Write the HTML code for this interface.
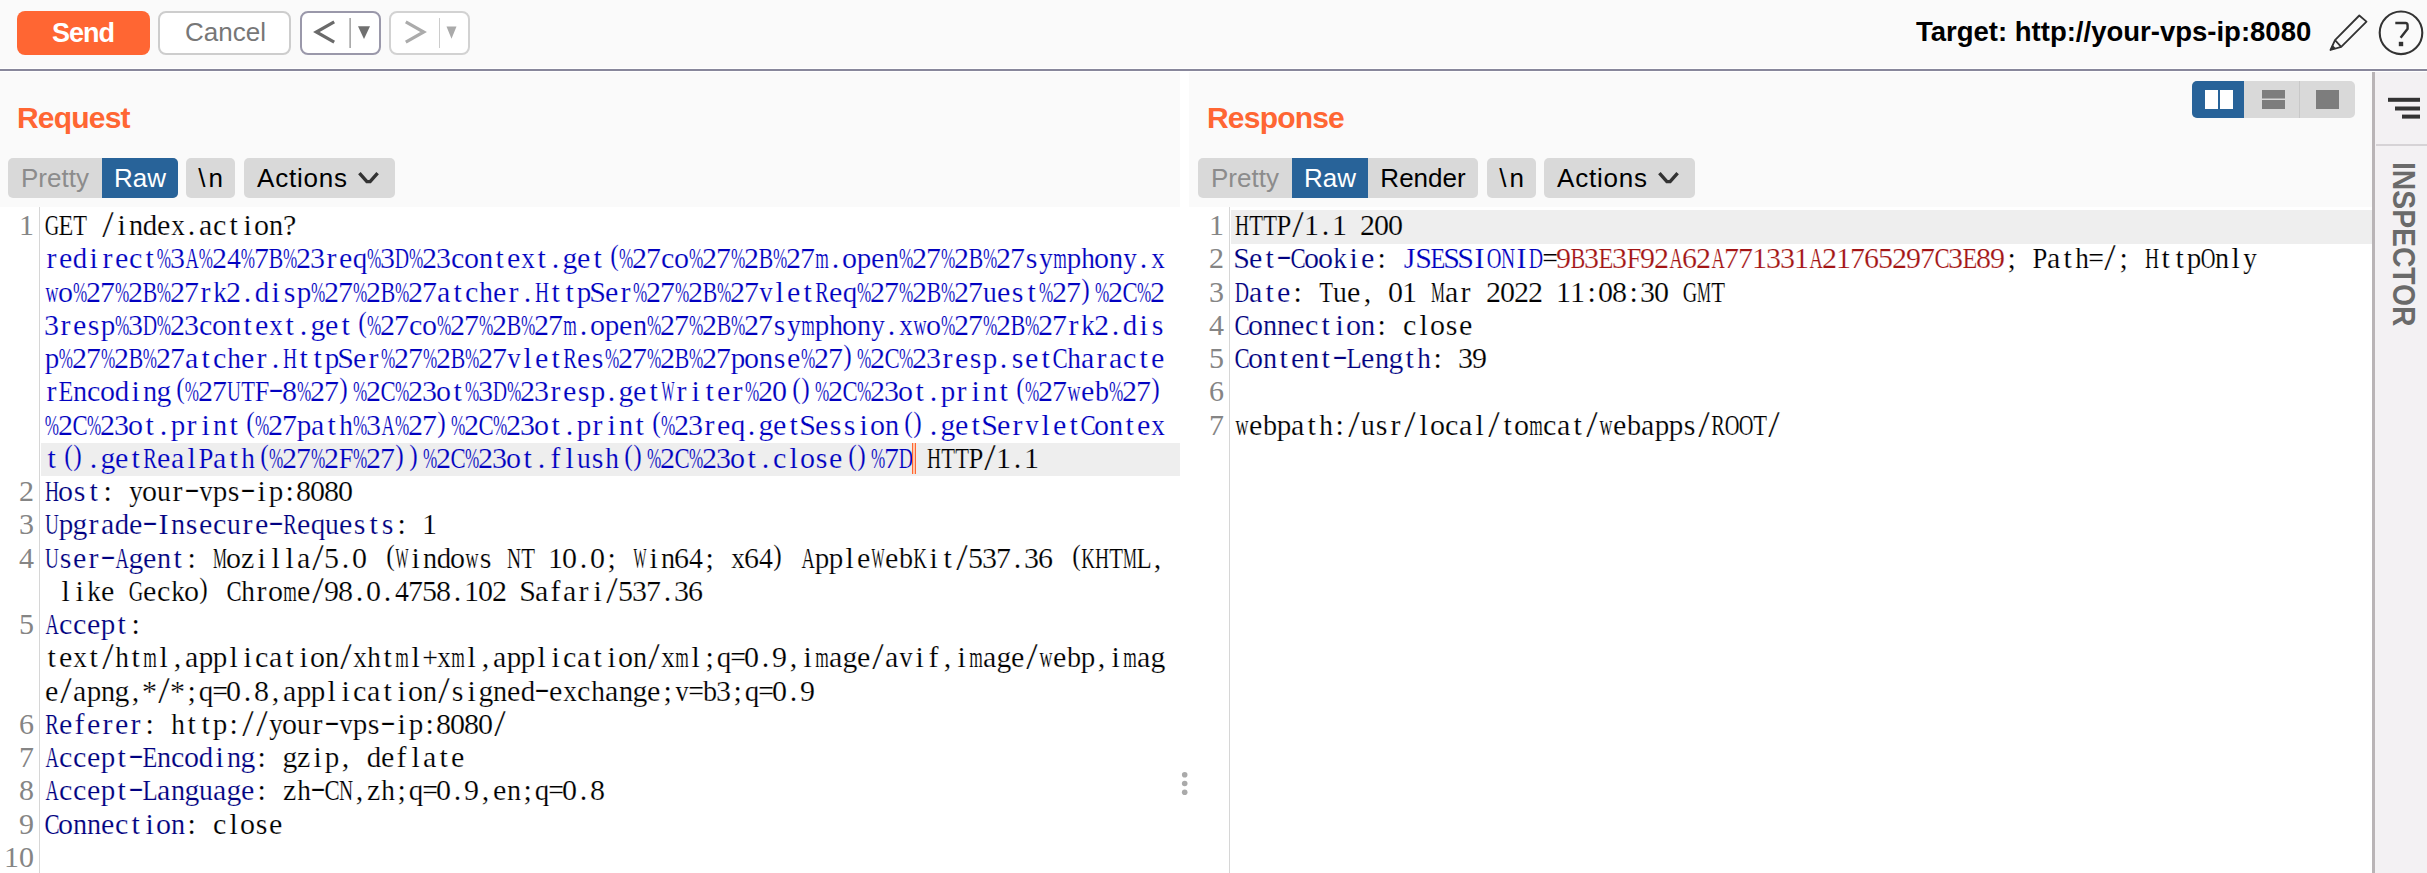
<!DOCTYPE html>
<html><head><meta charset="utf-8">
<style>
*{margin:0;padding:0;box-sizing:border-box}
html,body{width:2427px;height:873px;overflow:hidden;background:#fafafa;font-family:"Liberation Sans",sans-serif}
.abs{position:absolute}
#tb{position:absolute;left:0;top:0;width:2427px;height:69px;background:#fafafa}
#tbb{position:absolute;left:0;top:69px;width:2427px;height:2px;background:#88879b}
.btn{position:absolute;top:11px;height:44px;border-radius:8px;font-size:26px;text-align:center;line-height:44px}
#send{left:17px;width:133px;background:#ff6633;color:#fff;font-weight:bold;font-size:27px;letter-spacing:-1px;text-indent:-1px}
#cancel{left:158px;width:133px;background:#fff;border:2px solid #cdcdcd;color:#777;line-height:38px;text-indent:2px}
#prev{left:300px;width:81px;background:#fff;border:2px solid #9a98aa}
#next{left:389px;width:81px;background:#fff;border:2px solid #d2d2d2}
#target{position:absolute;left:1916px;top:14px;font-size:27.5px;font-weight:bold;color:#000;white-space:nowrap;line-height:36px}
.hdr{position:absolute;top:72px;height:135px;background:#fafafa}
.code{position:absolute;top:207px;height:666px;background:#fff}
.title{position:absolute;top:98px;font-size:30px;font-weight:bold;color:#ff6633;line-height:40px;white-space:nowrap;letter-spacing:-0.8px}
.tabs{position:absolute;top:158px;height:40px;background:#d9d9d9;border-radius:5px;font-size:26px;line-height:40px;white-space:nowrap}
.tab{position:absolute;top:0;height:40px;text-align:center}
.sel{background:#286399;color:#fff}
.gut{position:absolute;top:207px;width:1px;height:666px;background:#d6d6d6}
.hl{position:absolute;height:33px;background:#eeeeee}
.ln{position:absolute;width:40px;text-align:right;font-family:"Liberation Serif",serif;font-size:30px;line-height:33.25px;color:#858585}
.rqn{left:-6px}
.rsn{left:1184px}
.cl{position:absolute;font-family:"Liberation Serif",serif;font-size:30px;line-height:33.25px;white-space:pre;-webkit-text-stroke:0.2px #fff}
.cl b{display:inline-flex;justify-content:center;width:14px;font-weight:normal}
.cl b.hy{transform:translateY(-2.8px) scaleX(1.55)}.cl b.pl{transform:translate(2.6px,-3.2px) scaleX(.85)}.cl b.pr{transform:translate(-2.6px,-3.2px) scaleX(.85)}.cl b.s46{transform:scaleX(0.46)}.cl b.s52{transform:scaleX(0.52)}.cl b.s57{transform:scaleX(0.57)}.cl b.s58{transform:scaleX(0.58)}.cl b.s60{transform:scaleX(0.6)}.cl b.s61{transform:scaleX(0.61)}.cl b.s63{transform:scaleX(0.63)}.cl b.s64{transform:scaleX(0.64)}.cl b.s65{transform:scaleX(0.65)}.cl b.s66{transform:scaleX(0.66)}.cl b.s67{transform:scaleX(0.67)}.cl b.s68{transform:scaleX(0.68)}.cl b.s74{transform:scaleX(0.74)}.cl b.s75{transform:scaleX(0.75)}.cl b.s76{transform:scaleX(0.76)}.cl b.s81{transform:scaleX(0.81)}.cl b.s83{transform:scaleX(0.83)}.cl b.s87{transform:scaleX(0.87)}.cl b.s88{transform:scaleX(0.88)}.cl b.s89{transform:scaleX(0.89)}.cl b.s90{transform:scaleX(0.9)}.cl b.s91{transform:scaleX(0.91)}.cl b.s92{transform:scaleX(0.92)}.cl b.s93{transform:scaleX(0.93)}.cl b.s94{transform:scaleX(0.94)}.cl b.s96{transform:scaleX(0.96)}.cl b.s97{transform:scaleX(0.97)}.cl b.s99{transform:scaleX(0.99)}.cl b.sl{transform:translateY(-0.8px) scale(1.38,1.25)}
.rqt{left:44.6px}
.cl.hlt{-webkit-text-stroke-color:#eee}
.rst{left:1234.6px}
#side{position:absolute;left:2375px;top:72px;width:52px;height:801px;background:#f3f1f3}
#sideb{position:absolute;left:2372px;top:72px;width:3px;height:801px;background:#b9b4b6}
</style></head><body>
<div id="tb"></div>
<div class="abs" style="left:0;top:68px;width:2427px;height:4px;background:#fff"></div>
<div id="tbb"></div>
<div class="btn" id="send">Send</div>
<div class="btn" id="cancel">Cancel</div>
<div class="btn" id="prev"></div>
<div class="btn" id="next"></div>
<svg class="abs" style="left:0;top:0" width="480" height="70">
 <polyline points="334.2,21.8 316.3,32 334.2,42.2" fill="none" stroke="#6a6a6a" stroke-width="3.2"/>
 <rect x="349.5" y="18" width="1.2" height="30" fill="#888"/>
 <polygon points="358,26.3 370,26.3 364,38.9" fill="#707070"/>
 <polyline points="405.8,21.8 423.7,32 405.8,42.2" fill="none" stroke="#ababab" stroke-width="3.2"/>
 <rect x="439" y="18" width="1" height="30" fill="#ccc"/>
 <polygon points="446.5,26.5 456.5,26.5 451.5,38.7" fill="#aaa"/>
</svg>
<div id="target">Target: http://your-vps-ip:8080</div>
<svg class="abs" style="left:2320px;top:0" width="107" height="69">
 <path d="M10.5,50 L15,40.2 L39.3,15.5 L46.5,21.6 L21.2,46.9 Z M15,40.2 L21.2,46.9" fill="none" stroke="#333" stroke-width="1.8" stroke-linejoin="round"/><path d="M10,50.5 L12.3,44.8 L15.8,48.2 Z" fill="#333"/>
 <circle cx="81" cy="32.8" r="21.3" fill="none" stroke="#333" stroke-width="2.1"/>
 <path d="M75.3,23 L85.5,23 Q87.6,23 87.6,25.5 L87.6,28.8 L80.6,37.8" fill="none" stroke="#333" stroke-width="2.4"/>
 <rect x="78.8" y="41.8" width="4.4" height="4.4" fill="#333"/>
</svg>

<!-- request panel -->
<div class="hdr" style="left:0;width:1180px"></div>
<div class="abs" style="left:1180px;top:72px;width:9px;height:801px;background:#fff"></div>
<div class="code" style="left:0;width:1180px"></div>
<div class="title" style="left:17px">Request</div>
<div class="tabs" style="left:8px;width:170px">
 <div class="tab" style="left:0;width:94px;color:#8c8c8c">Pretty</div>
 <div class="tab sel" style="left:94px;width:76px;border-radius:0 5px 5px 0">Raw</div>
</div>
<div class="tabs" style="left:186px;width:49px"><div class="tab" style="left:0;width:49px;color:#000;letter-spacing:3px;text-indent:3px">\n</div></div>
<div class="tabs" style="left:244px;width:151px"><div class="tab" style="left:13px;color:#000;letter-spacing:0.8px">Actions</div>
 <svg class="abs" style="left:113px;top:12px" width="24" height="16"><polyline points="2.4,3.2 9.9,11.6 13.1,11.6 20.6,3.2" fill="none" stroke="#333" stroke-width="3.4"/></svg></div>
<div class="gut" style="left:39px"></div>
<div class="hl" style="left:41px;top:443px;width:1139px"></div>
<svg class="abs" style="left:1180px;top:768px" width="10" height="30">
 <circle cx="4.7" cy="6.8" r="2.8" fill="#aaa"/><circle cx="4.7" cy="15.5" r="2.8" fill="#aaa"/><circle cx="4.7" cy="24.3" r="2.8" fill="#aaa"/>
</svg>
<div class="ln rqn" style="top:208.20px">1</div>
<div class="cl rqt" style="top:208.20px"><span style="color:#000"><b class="s67">G</b><b class="s81">E</b><b class="s75">T</b><b> </b><b class="sl">/</b><b>i</b><b class="s94">n</b><b class="s96">d</b><b>e</b><b class="s90">x</b><b>.</b><b>a</b><b>c</b><b>t</b><b>i</b><b>o</b><b class="s94">n</b><b>?</b></span></div>
<div class="cl rqt" style="top:241.45px"><span style="color:#0000c0"><b>r</b><b>e</b><b class="s96">d</b><b>i</b><b>r</b><b>e</b><b>c</b><b>t</b><b class="s57">%</b><b>3</b><b class="s61">A</b><b class="s57">%</b><b>2</b><b class="s93">4</b><b class="s57">%</b><b>7</b><b class="s74">B</b><b class="s57">%</b><b>2</b><b>3</b><b>r</b><b>e</b><b class="s97">q</b><b class="s57">%</b><b>3</b><b class="s66">D</b><b class="s57">%</b><b>2</b><b>3</b><b>c</b><b>o</b><b class="s94">n</b><b>t</b><b>e</b><b class="s90">x</b><b>t</b><b>.</b><b class="s99">g</b><b>e</b><b>t</b><b class="pl">(</b><b class="s57">%</b><b>2</b><b>7</b><b>c</b><b>o</b><b class="s57">%</b><b>2</b><b>7</b><b class="s57">%</b><b>2</b><b class="s74">B</b><b class="s57">%</b><b>2</b><b>7</b><b class="s58">m</b><b>.</b><b>o</b><b class="s97">p</b><b>e</b><b class="s94">n</b><b class="s57">%</b><b>2</b><b>7</b><b class="s57">%</b><b>2</b><b class="s74">B</b><b class="s57">%</b><b>2</b><b>7</b><b>s</b><b class="s90">y</b><b class="s58">m</b><b class="s97">p</b><b class="s91">h</b><b>o</b><b class="s94">n</b><b class="s90">y</b><b>.</b><b class="s90">x</b></span></div>
<div class="cl rqt" style="top:274.70px"><span style="color:#0000c0"><b class="s60">w</b><b>o</b><b class="s57">%</b><b>2</b><b>7</b><b class="s57">%</b><b>2</b><b class="s74">B</b><b class="s57">%</b><b>2</b><b>7</b><b>r</b><b class="s90">k</b><b>2</b><b>.</b><b class="s96">d</b><b>i</b><b>s</b><b class="s97">p</b><b class="s57">%</b><b>2</b><b>7</b><b class="s57">%</b><b>2</b><b class="s74">B</b><b class="s57">%</b><b>2</b><b>7</b><b>a</b><b>t</b><b>c</b><b class="s91">h</b><b>e</b><b>r</b><b>.</b><b class="s65">H</b><b>t</b><b>t</b><b class="s97">p</b><b>S</b><b>e</b><b>r</b><b class="s57">%</b><b>2</b><b>7</b><b class="s57">%</b><b>2</b><b class="s74">B</b><b class="s57">%</b><b>2</b><b>7</b><b class="s87">v</b><b>l</b><b>e</b><b>t</b><b class="s68">R</b><b>e</b><b class="s97">q</b><b class="s57">%</b><b>2</b><b>7</b><b class="s57">%</b><b>2</b><b class="s74">B</b><b class="s57">%</b><b>2</b><b>7</b><b class="s92">u</b><b>e</b><b>s</b><b>t</b><b class="s57">%</b><b>2</b><b>7</b><b class="pr">)</b><b class="s57">%</b><b>2</b><b class="s76">C</b><b class="s57">%</b><b>2</b></span></div>
<div class="cl rqt" style="top:307.95px"><span style="color:#0000c0"><b>3</b><b>r</b><b>e</b><b>s</b><b class="s97">p</b><b class="s57">%</b><b>3</b><b class="s66">D</b><b class="s57">%</b><b>2</b><b>3</b><b>c</b><b>o</b><b class="s94">n</b><b>t</b><b>e</b><b class="s90">x</b><b>t</b><b>.</b><b class="s99">g</b><b>e</b><b>t</b><b class="pl">(</b><b class="s57">%</b><b>2</b><b>7</b><b>c</b><b>o</b><b class="s57">%</b><b>2</b><b>7</b><b class="s57">%</b><b>2</b><b class="s74">B</b><b class="s57">%</b><b>2</b><b>7</b><b class="s58">m</b><b>.</b><b>o</b><b class="s97">p</b><b>e</b><b class="s94">n</b><b class="s57">%</b><b>2</b><b>7</b><b class="s57">%</b><b>2</b><b class="s74">B</b><b class="s57">%</b><b>2</b><b>7</b><b>s</b><b class="s90">y</b><b class="s58">m</b><b class="s97">p</b><b class="s91">h</b><b>o</b><b class="s94">n</b><b class="s90">y</b><b>.</b><b class="s90">x</b><b class="s60">w</b><b>o</b><b class="s57">%</b><b>2</b><b>7</b><b class="s57">%</b><b>2</b><b class="s74">B</b><b class="s57">%</b><b>2</b><b>7</b><b>r</b><b class="s90">k</b><b>2</b><b>.</b><b class="s96">d</b><b>i</b><b>s</b></span></div>
<div class="cl rqt" style="top:341.20px"><span style="color:#0000c0"><b class="s97">p</b><b class="s57">%</b><b>2</b><b>7</b><b class="s57">%</b><b>2</b><b class="s74">B</b><b class="s57">%</b><b>2</b><b>7</b><b>a</b><b>t</b><b>c</b><b class="s91">h</b><b>e</b><b>r</b><b>.</b><b class="s65">H</b><b>t</b><b>t</b><b class="s97">p</b><b>S</b><b>e</b><b>r</b><b class="s57">%</b><b>2</b><b>7</b><b class="s57">%</b><b>2</b><b class="s74">B</b><b class="s57">%</b><b>2</b><b>7</b><b class="s87">v</b><b>l</b><b>e</b><b>t</b><b class="s68">R</b><b>e</b><b>s</b><b class="s57">%</b><b>2</b><b>7</b><b class="s57">%</b><b>2</b><b class="s74">B</b><b class="s57">%</b><b>2</b><b>7</b><b class="s97">p</b><b>o</b><b class="s94">n</b><b>s</b><b>e</b><b class="s57">%</b><b>2</b><b>7</b><b class="pr">)</b><b class="s57">%</b><b>2</b><b class="s76">C</b><b class="s57">%</b><b>2</b><b>3</b><b>r</b><b>e</b><b>s</b><b class="s97">p</b><b>.</b><b>s</b><b>e</b><b>t</b><b class="s76">C</b><b class="s91">h</b><b>a</b><b>r</b><b>a</b><b>c</b><b>t</b><b>e</b></span></div>
<div class="cl rqt" style="top:374.45px"><span style="color:#0000c0"><b>r</b><b class="s81">E</b><b class="s94">n</b><b>c</b><b>o</b><b class="s96">d</b><b>i</b><b class="s94">n</b><b class="s99">g</b><b class="pl">(</b><b class="s57">%</b><b>2</b><b>7</b><b class="s64">U</b><b class="s75">T</b><b class="s88">F</b><b class="hy">-</b><b>8</b><b class="s57">%</b><b>2</b><b>7</b><b class="pr">)</b><b class="s57">%</b><b>2</b><b class="s76">C</b><b class="s57">%</b><b>2</b><b>3</b><b>o</b><b>t</b><b class="s57">%</b><b>3</b><b class="s66">D</b><b class="s57">%</b><b>2</b><b>3</b><b>r</b><b>e</b><b>s</b><b class="s97">p</b><b>.</b><b class="s99">g</b><b>e</b><b>t</b><b class="s46">W</b><b>r</b><b>i</b><b>t</b><b>e</b><b>r</b><b class="s57">%</b><b>2</b><b>0</b><b class="pl">(</b><b class="pr">)</b><b class="s57">%</b><b>2</b><b class="s76">C</b><b class="s57">%</b><b>2</b><b>3</b><b>o</b><b>t</b><b>.</b><b class="s97">p</b><b>r</b><b>i</b><b class="s94">n</b><b>t</b><b class="pl">(</b><b class="s57">%</b><b>2</b><b>7</b><b class="s60">w</b><b>e</b><b class="s94">b</b><b class="s57">%</b><b>2</b><b>7</b><b class="pr">)</b></span></div>
<div class="cl rqt" style="top:407.70px"><span style="color:#0000c0"><b class="s57">%</b><b>2</b><b class="s76">C</b><b class="s57">%</b><b>2</b><b>3</b><b>o</b><b>t</b><b>.</b><b class="s97">p</b><b>r</b><b>i</b><b class="s94">n</b><b>t</b><b class="pl">(</b><b class="s57">%</b><b>2</b><b>7</b><b class="s97">p</b><b>a</b><b>t</b><b class="s91">h</b><b class="s57">%</b><b>3</b><b class="s61">A</b><b class="s57">%</b><b>2</b><b>7</b><b class="pr">)</b><b class="s57">%</b><b>2</b><b class="s76">C</b><b class="s57">%</b><b>2</b><b>3</b><b>o</b><b>t</b><b>.</b><b class="s97">p</b><b>r</b><b>i</b><b class="s94">n</b><b>t</b><b class="pl">(</b><b class="s57">%</b><b>2</b><b>3</b><b>r</b><b>e</b><b class="s97">q</b><b>.</b><b class="s99">g</b><b>e</b><b>t</b><b>S</b><b>e</b><b>s</b><b>s</b><b>i</b><b>o</b><b class="s94">n</b><b class="pl">(</b><b class="pr">)</b><b>.</b><b class="s99">g</b><b>e</b><b>t</b><b>S</b><b>e</b><b>r</b><b class="s87">v</b><b>l</b><b>e</b><b>t</b><b class="s76">C</b><b>o</b><b class="s94">n</b><b>t</b><b>e</b><b class="s90">x</b></span></div>
<div class="cl rqt hlt" style="top:440.95px"><span style="color:#0000c0"><b>t</b><b class="pl">(</b><b class="pr">)</b><b>.</b><b class="s99">g</b><b>e</b><b>t</b><b class="s68">R</b><b>e</b><b>a</b><b>l</b><b class="s89">P</b><b>a</b><b>t</b><b class="s91">h</b><b class="pl">(</b><b class="s57">%</b><b>2</b><b>7</b><b class="s57">%</b><b>2</b><b class="s88">F</b><b class="s57">%</b><b>2</b><b>7</b><b class="pr">)</b><b class="pr">)</b><b class="s57">%</b><b>2</b><b class="s76">C</b><b class="s57">%</b><b>2</b><b>3</b><b>o</b><b>t</b><b>.</b><b>f</b><b>l</b><b class="s92">u</b><b>s</b><b class="s91">h</b><b class="pl">(</b><b class="pr">)</b><b class="s57">%</b><b>2</b><b class="s76">C</b><b class="s57">%</b><b>2</b><b>3</b><b>o</b><b>t</b><b>.</b><b>c</b><b>l</b><b>o</b><b>s</b><b>e</b><b class="pl">(</b><b class="pr">)</b><b class="s57">%</b><b>7</b><b class="s66">D</b></span><span style="color:#000"><b> </b><b class="s65">H</b><b class="s75">T</b><b class="s75">T</b><b class="s89">P</b><b class="sl">/</b><b>1</b><b>.</b><b>1</b></span></div>
<div class="ln rqn" style="top:474.20px">2</div>
<div class="cl rqt" style="top:474.20px"><span style="color:#000080"><b class="s65">H</b><b>o</b><b>s</b><b>t</b></span><span style="color:#000"><b>:</b><b> </b><b class="s90">y</b><b>o</b><b class="s92">u</b><b>r</b><b class="hy">-</b><b class="s87">v</b><b class="s97">p</b><b>s</b><b class="hy">-</b><b>i</b><b class="s97">p</b><b>:</b><b>8</b><b>0</b><b>8</b><b>0</b></span></div>
<div class="ln rqn" style="top:507.45px">3</div>
<div class="cl rqt" style="top:507.45px"><span style="color:#000080"><b class="s64">U</b><b class="s97">p</b><b class="s99">g</b><b>r</b><b>a</b><b class="s96">d</b><b>e</b><b class="hy">-</b><b>I</b><b class="s94">n</b><b>s</b><b>e</b><b>c</b><b class="s92">u</b><b>r</b><b>e</b><b class="hy">-</b><b class="s68">R</b><b>e</b><b class="s97">q</b><b class="s92">u</b><b>e</b><b>s</b><b>t</b><b>s</b></span><span style="color:#000"><b>:</b><b> </b><b>1</b></span></div>
<div class="ln rqn" style="top:540.70px">4</div>
<div class="cl rqt" style="top:540.70px"><span style="color:#000080"><b class="s64">U</b><b>s</b><b>e</b><b>r</b><b class="hy">-</b><b class="s61">A</b><b class="s99">g</b><b>e</b><b class="s94">n</b><b>t</b></span><span style="color:#000"><b>:</b><b> </b><b class="s52">M</b><b>o</b><b>z</b><b>i</b><b>l</b><b>l</b><b>a</b><b class="sl">/</b><b>5</b><b>.</b><b>0</b><b> </b><b class="pl">(</b><b class="s46">W</b><b>i</b><b class="s94">n</b><b class="s96">d</b><b>o</b><b class="s60">w</b><b>s</b><b> </b><b class="s65">N</b><b class="s75">T</b><b> </b><b>1</b><b>0</b><b>.</b><b>0</b><b>;</b><b> </b><b class="s46">W</b><b>i</b><b class="s94">n</b><b>6</b><b class="s93">4</b><b>;</b><b> </b><b class="s90">x</b><b>6</b><b class="s93">4</b><b class="pr">)</b><b> </b><b class="s61">A</b><b class="s97">p</b><b class="s97">p</b><b>l</b><b>e</b><b class="s46">W</b><b>e</b><b class="s94">b</b><b class="s63">K</b><b>i</b><b>t</b><b class="sl">/</b><b>5</b><b>3</b><b>7</b><b>.</b><b>3</b><b>6</b><b> </b><b class="pl">(</b><b class="s63">K</b><b class="s65">H</b><b class="s75">T</b><b class="s52">M</b><b class="s83">L</b><b>,</b></span></div>
<div class="cl rqt" style="top:573.95px"><span style="color:#000"><b> </b><b>l</b><b>i</b><b class="s90">k</b><b>e</b><b> </b><b class="s67">G</b><b>e</b><b>c</b><b class="s90">k</b><b>o</b><b class="pr">)</b><b> </b><b class="s76">C</b><b class="s91">h</b><b>r</b><b>o</b><b class="s58">m</b><b>e</b><b class="sl">/</b><b>9</b><b>8</b><b>.</b><b>0</b><b>.</b><b class="s93">4</b><b>7</b><b>5</b><b>8</b><b>.</b><b>1</b><b>0</b><b>2</b><b> </b><b>S</b><b>a</b><b>f</b><b>a</b><b>r</b><b>i</b><b class="sl">/</b><b>5</b><b>3</b><b>7</b><b>.</b><b>3</b><b>6</b></span></div>
<div class="ln rqn" style="top:607.20px">5</div>
<div class="cl rqt" style="top:607.20px"><span style="color:#000080"><b class="s61">A</b><b>c</b><b>c</b><b>e</b><b class="s97">p</b><b>t</b></span><span style="color:#000"><b>:</b></span></div>
<div class="cl rqt" style="top:640.45px"><span style="color:#000"><b>t</b><b>e</b><b class="s90">x</b><b>t</b><b class="sl">/</b><b class="s91">h</b><b>t</b><b class="s58">m</b><b>l</b><b>,</b><b>a</b><b class="s97">p</b><b class="s97">p</b><b>l</b><b>i</b><b>c</b><b>a</b><b>t</b><b>i</b><b>o</b><b class="s94">n</b><b class="sl">/</b><b class="s90">x</b><b class="s91">h</b><b>t</b><b class="s58">m</b><b>l</b><b class="s93">+</b><b class="s90">x</b><b class="s58">m</b><b>l</b><b>,</b><b>a</b><b class="s97">p</b><b class="s97">p</b><b>l</b><b>i</b><b>c</b><b>a</b><b>t</b><b>i</b><b>o</b><b class="s94">n</b><b class="sl">/</b><b class="s90">x</b><b class="s58">m</b><b>l</b><b>;</b><b class="s97">q</b><b class="s93">=</b><b>0</b><b>.</b><b>9</b><b>,</b><b>i</b><b class="s58">m</b><b>a</b><b class="s99">g</b><b>e</b><b class="sl">/</b><b>a</b><b class="s87">v</b><b>i</b><b>f</b><b>,</b><b>i</b><b class="s58">m</b><b>a</b><b class="s99">g</b><b>e</b><b class="sl">/</b><b class="s60">w</b><b>e</b><b class="s94">b</b><b class="s97">p</b><b>,</b><b>i</b><b class="s58">m</b><b>a</b><b class="s99">g</b></span></div>
<div class="cl rqt" style="top:673.70px"><span style="color:#000"><b>e</b><b class="sl">/</b><b>a</b><b class="s97">p</b><b class="s94">n</b><b class="s99">g</b><b>,</b><b>*</b><b class="sl">/</b><b>*</b><b>;</b><b class="s97">q</b><b class="s93">=</b><b>0</b><b>.</b><b>8</b><b>,</b><b>a</b><b class="s97">p</b><b class="s97">p</b><b>l</b><b>i</b><b>c</b><b>a</b><b>t</b><b>i</b><b>o</b><b class="s94">n</b><b class="sl">/</b><b>s</b><b>i</b><b class="s99">g</b><b class="s94">n</b><b>e</b><b class="s96">d</b><b class="hy">-</b><b>e</b><b class="s90">x</b><b>c</b><b class="s91">h</b><b>a</b><b class="s94">n</b><b class="s99">g</b><b>e</b><b>;</b><b class="s87">v</b><b class="s93">=</b><b class="s94">b</b><b>3</b><b>;</b><b class="s97">q</b><b class="s93">=</b><b>0</b><b>.</b><b>9</b></span></div>
<div class="ln rqn" style="top:706.95px">6</div>
<div class="cl rqt" style="top:706.95px"><span style="color:#000080"><b class="s68">R</b><b>e</b><b>f</b><b>e</b><b>r</b><b>e</b><b>r</b></span><span style="color:#000"><b>:</b><b> </b><b class="s91">h</b><b>t</b><b>t</b><b class="s97">p</b><b>:</b><b class="sl">/</b><b class="sl">/</b><b class="s90">y</b><b>o</b><b class="s92">u</b><b>r</b><b class="hy">-</b><b class="s87">v</b><b class="s97">p</b><b>s</b><b class="hy">-</b><b>i</b><b class="s97">p</b><b>:</b><b>8</b><b>0</b><b>8</b><b>0</b><b class="sl">/</b></span></div>
<div class="ln rqn" style="top:740.20px">7</div>
<div class="cl rqt" style="top:740.20px"><span style="color:#000080"><b class="s61">A</b><b>c</b><b>c</b><b>e</b><b class="s97">p</b><b>t</b><b class="hy">-</b><b class="s81">E</b><b class="s94">n</b><b>c</b><b>o</b><b class="s96">d</b><b>i</b><b class="s94">n</b><b class="s99">g</b></span><span style="color:#000"><b>:</b><b> </b><b class="s99">g</b><b>z</b><b>i</b><b class="s97">p</b><b>,</b><b> </b><b class="s96">d</b><b>e</b><b>f</b><b>l</b><b>a</b><b>t</b><b>e</b></span></div>
<div class="ln rqn" style="top:773.45px">8</div>
<div class="cl rqt" style="top:773.45px"><span style="color:#000080"><b class="s61">A</b><b>c</b><b>c</b><b>e</b><b class="s97">p</b><b>t</b><b class="hy">-</b><b class="s83">L</b><b>a</b><b class="s94">n</b><b class="s99">g</b><b class="s92">u</b><b>a</b><b class="s99">g</b><b>e</b></span><span style="color:#000"><b>:</b><b> </b><b>z</b><b class="s91">h</b><b class="hy">-</b><b class="s76">C</b><b class="s65">N</b><b>,</b><b>z</b><b class="s91">h</b><b>;</b><b class="s97">q</b><b class="s93">=</b><b>0</b><b>.</b><b>9</b><b>,</b><b>e</b><b class="s94">n</b><b>;</b><b class="s97">q</b><b class="s93">=</b><b>0</b><b>.</b><b>8</b></span></div>
<div class="ln rqn" style="top:806.70px">9</div>
<div class="cl rqt" style="top:806.70px"><span style="color:#000080"><b class="s76">C</b><b>o</b><b class="s94">n</b><b class="s94">n</b><b>e</b><b>c</b><b>t</b><b>i</b><b>o</b><b class="s94">n</b></span><span style="color:#000"><b>:</b><b> </b><b>c</b><b>l</b><b>o</b><b>s</b><b>e</b></span></div>
<div class="ln rqn" style="top:839.95px">10</div>
<div class="abs" style="left:911.5px;top:443px;width:4px;height:31px;border-left:1.6px solid #ff6633;border-right:1.6px solid #ff6633;background:#ffc9ad"></div>


<!-- response panel -->
<div class="hdr" style="left:1189px;width:1183px"></div>
<div class="code" style="left:1189px;width:1183px"></div>
<div class="title" style="left:1207px">Response</div>
<div class="tabs" style="left:1198px;width:280px">
 <div class="tab" style="left:0;width:94px;color:#8c8c8c">Pretty</div>
 <div class="tab sel" style="left:94px;width:76px">Raw</div>
 <div class="tab" style="left:170px;width:110px;color:#000">Render</div>
</div>
<div class="tabs" style="left:1487px;width:49px"><div class="tab" style="left:0;width:49px;color:#000;letter-spacing:3px;text-indent:3px">\n</div></div>
<div class="tabs" style="left:1544px;width:151px"><div class="tab" style="left:13px;color:#000;letter-spacing:0.8px">Actions</div>
 <svg class="abs" style="left:113px;top:12px" width="24" height="16"><polyline points="2.4,3.2 9.9,11.6 13.1,11.6 20.6,3.2" fill="none" stroke="#333" stroke-width="3.4"/></svg></div>
<div class="gut" style="left:1229px"></div>
<div class="hl" style="left:1231px;top:210px;width:1141px;height:34px"></div>
<div class="ln rsn" style="top:208.20px">1</div>
<div class="cl rst hlt" style="top:208.20px"><span style="color:#000"><b class="s65">H</b><b class="s75">T</b><b class="s75">T</b><b class="s89">P</b><b class="sl">/</b><b>1</b><b>.</b><b>1</b><b> </b><b>2</b><b>0</b><b>0</b></span></div>
<div class="ln rsn" style="top:241.45px">2</div>
<div class="cl rst" style="top:241.45px"><span style="color:#000080"><b>S</b><b>e</b><b>t</b><b class="hy">-</b><b class="s76">C</b><b>o</b><b>o</b><b class="s90">k</b><b>i</b><b>e</b></span><span style="color:#000"><b>:</b><b> </b></span><span style="color:#0000c0"><b>J</b><b>S</b><b class="s81">E</b><b>S</b><b>S</b><b>I</b><b class="s68">O</b><b class="s65">N</b><b>I</b><b class="s66">D</b></span><span style="color:#000"><b class="s93">=</b></span><span style="color:#a31515"><b>9</b><b class="s74">B</b><b>3</b><b class="s81">E</b><b>3</b><b class="s88">F</b><b>9</b><b>2</b><b class="s61">A</b><b>6</b><b>2</b><b class="s61">A</b><b>7</b><b>7</b><b>1</b><b>3</b><b>3</b><b>1</b><b class="s61">A</b><b>2</b><b>1</b><b>7</b><b>6</b><b>5</b><b>2</b><b>9</b><b>7</b><b class="s76">C</b><b>3</b><b class="s81">E</b><b>8</b><b>9</b></span><span style="color:#000"><b>;</b><b> </b><b class="s89">P</b><b>a</b><b>t</b><b class="s91">h</b><b class="s93">=</b><b class="sl">/</b><b>;</b><b> </b><b class="s65">H</b><b>t</b><b>t</b><b class="s97">p</b><b class="s68">O</b><b class="s94">n</b><b>l</b><b class="s90">y</b></span></div>
<div class="ln rsn" style="top:274.70px">3</div>
<div class="cl rst" style="top:274.70px"><span style="color:#000080"><b class="s66">D</b><b>a</b><b>t</b><b>e</b></span><span style="color:#000"><b>:</b><b> </b><b class="s75">T</b><b class="s92">u</b><b>e</b><b>,</b><b> </b><b>0</b><b>1</b><b> </b><b class="s52">M</b><b>a</b><b>r</b><b> </b><b>2</b><b>0</b><b>2</b><b>2</b><b> </b><b>1</b><b>1</b><b>:</b><b>0</b><b>8</b><b>:</b><b>3</b><b>0</b><b> </b><b class="s67">G</b><b class="s52">M</b><b class="s75">T</b></span></div>
<div class="ln rsn" style="top:307.95px">4</div>
<div class="cl rst" style="top:307.95px"><span style="color:#000080"><b class="s76">C</b><b>o</b><b class="s94">n</b><b class="s94">n</b><b>e</b><b>c</b><b>t</b><b>i</b><b>o</b><b class="s94">n</b></span><span style="color:#000"><b>:</b><b> </b><b>c</b><b>l</b><b>o</b><b>s</b><b>e</b></span></div>
<div class="ln rsn" style="top:341.20px">5</div>
<div class="cl rst" style="top:341.20px"><span style="color:#000080"><b class="s76">C</b><b>o</b><b class="s94">n</b><b>t</b><b>e</b><b class="s94">n</b><b>t</b><b class="hy">-</b><b class="s83">L</b><b>e</b><b class="s94">n</b><b class="s99">g</b><b>t</b><b class="s91">h</b></span><span style="color:#000"><b>:</b><b> </b><b>3</b><b>9</b></span></div>
<div class="ln rsn" style="top:374.45px">6</div>
<div class="ln rsn" style="top:407.70px">7</div>
<div class="cl rst" style="top:407.70px"><span style="color:#000"><b class="s60">w</b><b>e</b><b class="s94">b</b><b class="s97">p</b><b>a</b><b>t</b><b class="s91">h</b><b>:</b><b class="sl">/</b><b class="s92">u</b><b>s</b><b>r</b><b class="sl">/</b><b>l</b><b>o</b><b>c</b><b>a</b><b>l</b><b class="sl">/</b><b>t</b><b>o</b><b class="s58">m</b><b>c</b><b>a</b><b>t</b><b class="sl">/</b><b class="s60">w</b><b>e</b><b class="s94">b</b><b>a</b><b class="s97">p</b><b class="s97">p</b><b>s</b><b class="sl">/</b><b class="s68">R</b><b class="s68">O</b><b class="s68">O</b><b class="s75">T</b><b class="sl">/</b></span></div>

<!-- layout toggles -->
<div class="abs" style="left:2192px;top:81px;width:163px;height:37px;background:#d9d9d9;border-radius:5px;overflow:hidden">
 <div class="abs" style="left:0;top:0;width:52px;height:37px;background:#286399"></div>
 <div class="abs" style="left:107px;top:0;width:1px;height:37px;background:#c8c8c8"></div>
</div>
<svg class="abs" style="left:2192px;top:81px" width="163" height="37">
 <rect x="13" y="9" width="13" height="19" fill="#fff"/><rect x="28" y="9" width="13" height="19" fill="#fff"/>
 <rect x="70" y="9" width="23" height="8.5" fill="#7d7d7d"/><rect x="70" y="19" width="23" height="9" fill="#7d7d7d"/>
 <rect x="124" y="9" width="23" height="19" fill="#7d7d7d"/>
</svg>

<!-- sidebar -->
<div id="sideb"></div>
<div id="side"></div>
<div class="abs" style="left:2376px;top:144px;width:51px;height:2px;background:#d6d3d6"></div>
<svg class="abs" style="left:2375px;top:72px" width="52" height="72">
 <rect x="13" y="25.8" width="32" height="4" fill="#333"/>
 <rect x="20" y="34.5" width="25" height="4" fill="#333"/>
 <rect x="27" y="42.6" width="18" height="4" fill="#333"/>
</svg>
<div class="abs" style="left:2420px;top:162px;transform-origin:0 0;transform:rotate(90deg) scaleX(0.884);font-size:32px;font-weight:bold;color:#6a6a6a;white-space:nowrap;line-height:32px">INSPECTOR</div>
</body></html>
